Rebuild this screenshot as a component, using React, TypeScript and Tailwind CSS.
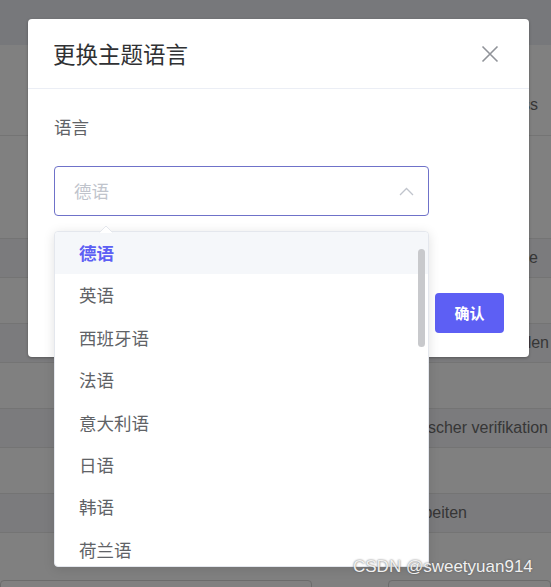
const cjk = "font-['Noto_Sans_CJK_SC','Noto_Sans',sans-serif]";

const rows = [
  { h: "h-[45px] bg-[#77787b]", text: "", box: "" },
  { h: "h-[91px] bg-[#808080] border-b border-[#747474] pt-[50px]", text: "Address", box: "w-[538px]" },
  { h: "h-[103px] bg-[#808080] border-b border-[#747474]", text: "", box: "" },
  { h: "h-[39px] bg-[#7b7b7d] border-b border-[#747474] flex items-center", text: "Sprache", box: "w-[538px]" },
  { h: "h-[46px] bg-[#808080] border-b border-[#747474]", text: "", box: "" },
  { h: "h-[39px] bg-[#7b7b7d] border-b border-[#747474] flex items-center", text: "Einstellen", box: "w-[549px]" },
  { h: "h-[46px] bg-[#808080] border-b border-[#747474]", text: "", box: "" },
  { h: "h-[39px] bg-[#7b7b7d] border-b border-[#747474] flex items-center", text: "Elektronischer verifikation", box: "w-[548px]" },
  { h: "h-[46px] bg-[#808080] border-b border-[#747474]", text: "", box: "" },
  { h: "h-[39px] bg-[#7b7b7d] border-b border-[#747474] flex items-center", text: "Bearbeiten", box: "w-[467px]" },
  { h: "h-[47px] bg-[#808080]", text: "", box: "" },
];

const languages = ["德语", "英语", "西班牙语", "法语", "意大利语", "日语", "韩语", "荷兰语"];

function Background() {
  return (
    <div className="flex flex-col font-['Liberation_Sans',Arial,sans-serif] text-[16px] leading-[20px] text-[#363636]">
      {rows.map((r, i) => (
        <div key={i} className={r.h}>
          {r.text && <div className={`${r.box} shrink-0 whitespace-nowrap text-right`}>{r.text}</div>}
        </div>
      ))}
      <div className="flex gap-[76px] bg-[#808080]">
        <div className="h-[40px] w-[312px] shrink-0 rounded-[4px] border border-[#6c6c6c]" />
        <div className="h-[40px] flex-1 rounded-[4px] border border-[#6c6c6c]" />
      </div>
    </div>
  );
}

function Dialog() {
  return (
    <div className={`absolute left-[28px] top-[19px] flex h-[338px] w-[501px] flex-col rounded-[4px] bg-white shadow-[0_1px_3px_rgba(0,0,0,0.3)] ${cjk}`}>
      <div className="flex h-[70px] items-center justify-between border-b border-[#ebeef5] pl-[25px] pr-[30px]">
        <h2 className="text-[22.5px] leading-none text-[#303133]">更换主题语言</h2>
        <svg width="18" height="18" viewBox="0 0 18 18">
          <path d="M1.5 1.5 L16.5 16.5 M16.5 1.5 L1.5 16.5" stroke="#909399" strokeWidth="1.6" />
        </svg>
      </div>
      <div className="flex flex-1 flex-col pl-[26px] pr-[25px] pt-[26px]">
        <label className="text-[17.5px] leading-[24px] text-[#606266]">语言</label>
        <div className="mt-[27px] flex h-[50px] w-[375px] items-center justify-between rounded-[4px] border border-[#6f72c9] pl-[19px] pr-[14px]">
          <span className="text-[17.5px] text-[#c0c4cc]">德语</span>
          <svg width="15" height="9" viewBox="0 0 15 9">
            <path d="M1 8 L7.5 1.5 L14 8" fill="none" stroke="#c0c4cc" strokeWidth="1.3" />
          </svg>
        </div>
        <div className="mt-[77px] flex justify-end">
          <button className="h-[40px] w-[69px] rounded-[4px] bg-[#5d5ff4] text-[15px] font-bold text-white">确认</button>
        </div>
      </div>
    </div>
  );
}

function Dropdown() {
  return (
    <div className={`absolute left-[54px] top-[231px] h-[336px] w-[375px] rounded-[4px] border border-[#e4e7ed] bg-white shadow-[0_2px_12px_rgba(0,0,0,0.12)] ${cjk}`}>
      <svg className="absolute -top-[7px] left-[44px]" width="14" height="8" viewBox="0 0 14 8">
        <path d="M0 8 L7 1 L14 8" fill="white" stroke="#e4e7ed" strokeWidth="1" />
        <rect x="0" y="7.5" width="14" height="1" fill="white" />
      </svg>
      <ul className="h-full overflow-hidden rounded-[4px]">
        {languages.map((l, i) => (
          <li
            key={l}
            className={
              i === 0
                ? "flex h-[42.4px] items-center bg-[#f5f7fa] pl-[24px] text-[17.5px] font-bold text-[#5d5ff4]"
                : "flex h-[42.4px] items-center pl-[24px] text-[17.5px] text-[#606266]"
            }
          >
            {l}
          </li>
        ))}
      </ul>
      <div className="absolute right-[3px] top-[17px] h-[98px] w-[7px] rounded-full bg-[#c8c9cc]" />
    </div>
  );
}

export default function App() {
  return (
    <div className="relative h-[587px] w-[551px] overflow-hidden bg-[#808080]">
      <Background />
      <Dialog />
      <Dropdown />
      <div className="absolute left-[353px] top-[557px] font-['Liberation_Sans',Arial,sans-serif] text-[17px] leading-[20px] text-[#f0f0f0] [text-shadow:0_0_2px_#555]">
        CSDN @sweetyuan914
      </div>
    </div>
  );
}
